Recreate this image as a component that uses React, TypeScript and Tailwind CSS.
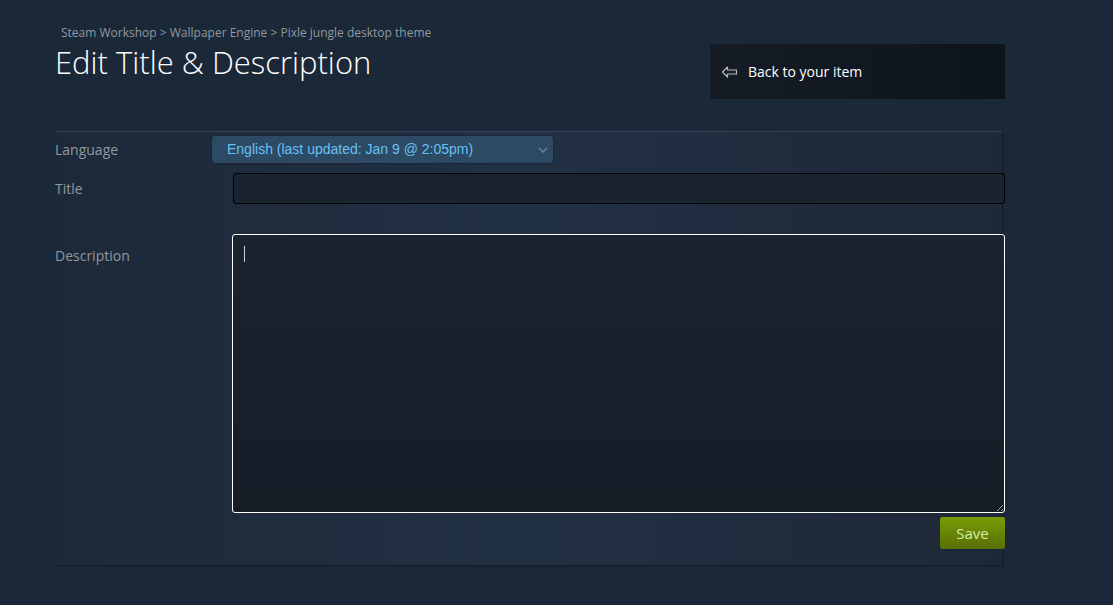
import React from 'react';

const sans = { fontFamily: '"Open Sans", "Noto Sans", Arial, sans-serif' };

function BackArrow() {
  return (
    <svg width="17" height="12" viewBox="0 0 17 12" fill="none" className="shrink-0">
      <path
        d="M6.5 1 L1.5 6 L6.5 11 V8 H15.5 V4 H6.5 Z"
        stroke="#b8bcc0"
        strokeWidth="1.2"
        strokeLinejoin="round"
      />
    </svg>
  );
}

export default function App() {
  return (
    <div className="min-h-[605px] w-full bg-[#1b2838]" style={sans}>
      <div className="ml-[55px] w-[950px] pt-[25px]">
        {/* Header */}
        <div className="flex items-start justify-between">
          <div>
            <div className="pl-[6px] text-[12px] leading-[16px] text-[#8f98a0]">
              Steam Workshop &gt; Wallpaper Engine &gt; Pixle jungle desktop theme
            </div>
            <h1 className="mt-[3px] text-[31px] font-light leading-[37px] text-white">
              Edit Title &amp; Description
            </h1>
          </div>
          <div className="mt-[19px] flex h-[55px] w-[295px] items-center gap-[10px] bg-gradient-to-r from-[#151c26] to-[#0e141b] pl-[11px]">
            <BackArrow />
            <span className="text-[14px] font-medium text-white">Back to your item</span>
          </div>
        </div>

        {/* Form panel */}
        <div className="mt-[32px] h-[434px] w-[947px] border-t border-[#34445a] bg-gradient-to-r from-[#1d2939] via-[#223044] to-[#1d2838] shadow-[1px_1px_2px_rgba(0,0,0,0.35)]">
          <div className="flex items-center pt-[4px]">
            <div className="w-[157px] text-[14px] text-[#8f98a0]">Language</div>
            <div
              className="relative flex h-[27px] w-[341px] items-center rounded-[3px] bg-[#2c4a64] pl-[15px] text-[14px] text-[#67c1f5] shadow-[0_0_2px_rgba(0,0,0,0.5)]"
              style={{ fontFamily: '"Liberation Sans", Arial, sans-serif' }}
            >
              English (last updated: Jan 9 @ 2:05pm)
              <svg width="10" height="6" viewBox="0 0 10 6" className="absolute right-[5px] top-[11px]">
                <path d="M1 1 L5 5 L9 1" stroke="#6d7f90" strokeWidth="1.5" fill="none" />
              </svg>
            </div>
          </div>

          <div className="mt-[10px] flex items-center">
            <div className="w-[178px] text-[14px] text-[#8f98a0]">Title</div>
            <input
              className="mr-[-3px] h-[31px] flex-1 rounded-[3px] border border-black bg-[#1a2330] px-2 text-[14px] text-white outline-none"
              defaultValue=""
            />
          </div>

          <div className="mt-[30px] flex items-start">
            <div className="w-[177px] pt-[11px] text-[14px] text-[#8f98a0]">Description</div>
            <div className="relative mr-[-3px] flex-1">
              <textarea
                className="block h-[279px] w-full rounded-[3px] border border-white bg-gradient-to-b from-[#1a2330] to-[#161d27] px-2 py-2 text-[14px] text-white outline-none"
                defaultValue=""
              />
              <div className="absolute left-[12px] top-[12px] h-[16px] w-px bg-[#c6d4df]" />
            </div>
          </div>

          <div className="mr-[-3px] mt-[4px] flex justify-end">
            <button className="h-[32px] w-[65px] rounded-[2px] bg-gradient-to-b from-[#7a9b05] to-[#587004] text-[15px] text-[#d2efa9]">
              Save
            </button>
          </div>
        </div>
      </div>
    </div>
  );
}
